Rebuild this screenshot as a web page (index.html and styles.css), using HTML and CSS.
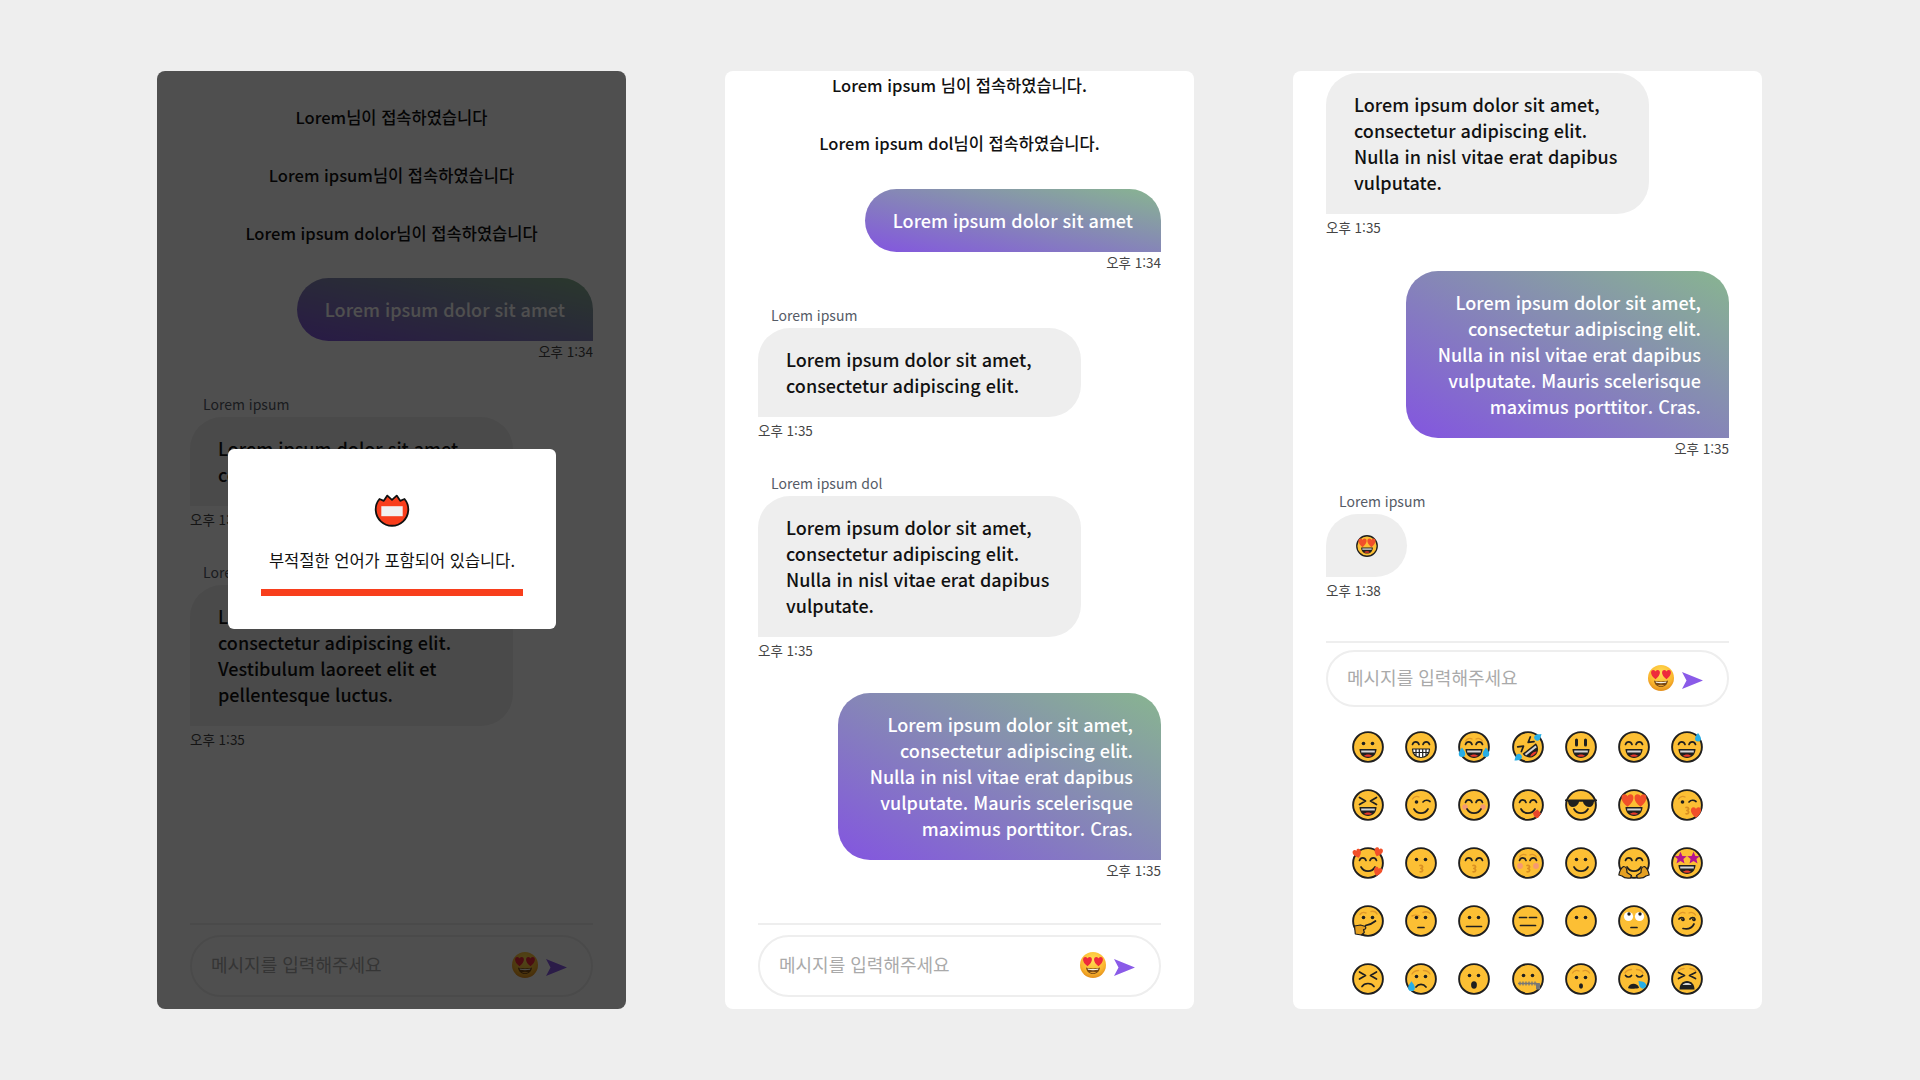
FILE: index.html
```html
<!DOCTYPE html>
<html lang="ko">
<head>
<meta charset="utf-8">
<title>Chat</title>
<link rel="stylesheet" href="styles.css">
</head>
<body>
<svg class="sprite" xmlns="http://www.w3.org/2000/svg" aria-hidden="true">
<defs>
<radialGradient id="gloss" cx="50%" cy="30%" r="75%"><stop offset="0" stop-color="#ffdf55"/><stop offset=".65" stop-color="#fbb62e"/><stop offset="1" stop-color="#dd8518"/></radialGradient>
<path id="h" d="M0 4.2C-6-.2-5-5-2.2-5-1-5-.2-4.2 0-3.4.2-4.2 1-5 2.2-5 5-5 6-.2 0 4.2z"/>
<path id="st" d="M0-5 1.5-1.6 5-1.5 2.3.8 3.2 4.4 0 2.4-3.2 4.4-2.3.8-5-1.5-1.5-1.6z"/>
<path id="dr" d="M0-4C1-2.4 2.6-.9 2.6.9A2.6 2.6 0 0 1-2.6.9C-2.6-.9-1-2.4 0-4z"/>
</defs>
<symbol id="f" viewBox="0 0 32 32"><circle class="face" cx="16" cy="16" r="14.9"/></symbol>
<symbol id="dots" viewBox="0 0 32 32"><circle class="ink" cx="11.5" cy="12.5" r="1.8"/><circle class="ink" cx="20.5" cy="12.5" r="1.8"/></symbol>
<symbol id="arcs" viewBox="0 0 32 32"><path class="ln" d="M7.5 13.5c1.2-3.6 5.3-3.6 6.5 0M18 13.5c1.2-3.6 5.3-3.6 6.5 0"/></symbol>
<symbol id="mo" viewBox="0 0 32 32"><path class="ink" d="M7.5 18h17c0 5.2-3.6 9-8.5 9s-8.5-3.8-8.5-9z"/><path class="teeth" d="M9.2 19.5h13.6v2H9.2z"/><path class="tongue" d="M12 25c1.400-2 6.600-2 8 0-1.400 1.100-6.400 1.100-8 0z"/></symbol>
<symbol id="sm" viewBox="0 0 32 32"><path class="ln" d="M9 20c3 5.500 11 5.500 14 0"/></symbol>
<symbol id="kis" viewBox="0 0 32 32"><path class="lip" d="M15 18.500c3-.6 3.600 2.200.8 3 2.800.6 2.400 3.600-.8 3.300"/></symbol>
<symbol id="bro" viewBox="0 0 32 32"><path class="brow" d="M7.500 10c1.500-2.600 4.500-3.200 6.500-2M24.500 10c-1.500-2.600-4.500-3.200-6.500-2"/></symbol>

<symbol id="e1" viewBox="0 0 32 32"><use href="#f"/><use href="#dots"/><use href="#mo"/></symbol>
<symbol id="e2" viewBox="0 0 32 32"><use href="#f"/><use href="#arcs"/><path class="grid" d="M7.500 18h17c0 5.200-3.600 8.500-8.500 8.500s-8.500-3.300-8.500-8.500zM7.800 21.500h16.400M11 18v7M14.300 18v8.300M17.700 18v8.300M21 18v7"/></symbol>
<symbol id="e3" viewBox="0 0 32 32"><use href="#f"/><use href="#bro"/><use href="#arcs"/><use href="#mo"/><use class="drop" href="#dr" transform="translate(4 21.500) scale(1.250)"/><use class="drop" href="#dr" transform="translate(28 21.500) scale(1.250)"/></symbol>
<symbol id="e4" viewBox="0 0 32 32"><use href="#f"/><g transform="rotate(-38 16 16)"><path class="ln" d="M8 9.500l5 3-5 3M24 9.500l-5 3 5 3"/><use href="#mo"/></g><use class="drop" href="#dr" transform="translate(26 6) rotate(50) scale(1.150)"/><use class="drop" href="#dr" transform="translate(6 26.500) rotate(230) scale(1.150)"/></symbol>
<symbol id="e5" viewBox="0 0 32 32"><use href="#f"/><rect class="ink" x="10" y="7.500" width="3" height="8" rx="1.500"/><rect class="ink" x="19" y="7.500" width="3" height="8" rx="1.500"/><use href="#mo"/></symbol>
<symbol id="e6" viewBox="0 0 32 32"><use href="#f"/><use href="#arcs"/><use href="#mo"/></symbol>
<symbol id="e7" viewBox="0 0 32 32"><use href="#f"/><use href="#arcs"/><use href="#mo"/><use class="drop" href="#dr" transform="translate(27 6.500) scale(1.150)"/></symbol>

<symbol id="e8" viewBox="0 0 32 32"><use href="#f"/><path class="ln" d="M7.500 8.500l6 3.500-6 3.500M24.500 8.500l-6 3.500 6 3.500"/><use href="#mo"/></symbol>
<symbol id="e9" viewBox="0 0 32 32"><use href="#f"/><path class="brow" d="M7.500 10c1.500-2.600 4.500-3.200 6.500-2"/><circle class="ink" cx="11.500" cy="13" r="1.800"/><path class="ln" d="M18 13c2-2 5-2 7-.5"/><use href="#sm"/></symbol>
<symbol id="e10" viewBox="0 0 32 32"><use href="#f"/><circle class="cheek" cx="7" cy="18" r="2.700"/><circle class="cheek" cx="25" cy="18" r="2.700"/><use href="#arcs"/><path class="ln" d="M9 20c3 5.500 11 5.500 14 0"/></symbol>
<symbol id="e11" viewBox="0 0 32 32"><use href="#f"/><use href="#arcs"/><use href="#sm"/><path class="tongue2" d="M21 23.500l4.500-3 3.500 4-3 4.500c-3 .5-5-3-5-5.500z"/></symbol>
<symbol id="e12" viewBox="0 0 32 32"><use href="#f"/><path class="ink" d="M-1 10.500h34l-1 1.600-3 .4c-.4 3.500-2 5.500-5 5.500s-5.500-2.500-6-5.200h-4c-.5 2.700-3 5.200-6 5.200s-4.600-2-5-5.500l-3-.4z"/><use href="#sm"/></symbol>
<symbol id="e13" viewBox="0 0 32 32"><use href="#f"/><use class="heart" href="#h" transform="translate(9.500 12) scale(1.350)"/><use class="heart" href="#h" transform="translate(22.500 12) scale(1.350)"/><use href="#mo"/></symbol>
<symbol id="e14" viewBox="0 0 32 32"><use href="#f"/><path class="brow" d="M7.500 10c1.500-2.600 4.500-3.200 6.500-2"/><circle class="ink" cx="11.500" cy="13" r="1.800"/><path class="ln" d="M18 13c2-2 5-2 7-.5"/><use href="#kis"/><use class="heart" href="#h" transform="translate(25 24) scale(1.150)"/></symbol>

<symbol id="e15" viewBox="0 0 32 32"><use href="#f"/><use href="#arcs"/><use href="#sm"/><use class="heart" href="#h" transform="translate(5.500 7) rotate(-20) scale(.95)"/><use class="heart" href="#h" transform="translate(26 5.500) rotate(20) scale(.95)"/><use class="heart" href="#h" transform="translate(25.500 25) rotate(20) scale(.95)"/></symbol>
<symbol id="e16" viewBox="0 0 32 32"><use href="#f"/><use href="#dots"/><use href="#kis"/></symbol>
<symbol id="e17" viewBox="0 0 32 32"><use href="#f"/><use href="#arcs"/><use href="#kis"/></symbol>
<symbol id="e18" viewBox="0 0 32 32"><use href="#f"/><use href="#bro"/><circle class="cheek" cx="8" cy="19" r="2.900"/><circle class="cheek" cx="24" cy="19" r="2.900"/><use href="#arcs"/><use href="#kis"/></symbol>
<symbol id="e19" viewBox="0 0 32 32"><use href="#f"/><use href="#dots"/><use href="#sm"/></symbol>
<symbol id="e20" viewBox="0 0 32 32"><use href="#f"/><use href="#arcs"/><use href="#sm"/><path class="hand" d="M.8 28c.6-3 2-7 4.700-8.500 2.600 0 3.500 3.500 3.500 6l4.500 3-1 2.500c-3 .5-7-.5-8.500-2zM31.200 28c-.6-3-2-7-4.700-8.500-2.600 0-3.500 3.500-3.500 6l-4.500 3 1 2.500c3 .5 7-.5 8.500-2z"/></symbol>
<symbol id="e21" viewBox="0 0 32 32"><use href="#f"/><use class="star" href="#st" transform="translate(9.500 11) scale(1.250)"/><use class="star" href="#st" transform="translate(22.500 11) scale(1.250)"/><use href="#mo"/></symbol>

<symbol id="e22" viewBox="0 0 32 32"><use href="#f"/><path class="brow" d="M8 9.500c1.500-2 4-2.500 6-1.500M19 6.500c2.500-.5 5 .5 6 2.500"/><use href="#dots"/><path class="ln" d="M13.500 20.500c3.500-.5 7-2 10-4.500"/><path class="hand" d="M2.500 21l6-1 5 1.500c.8 2 0 3-2 3l.8 3-3 2.500-6-1z"/></symbol>
<symbol id="e23" viewBox="0 0 32 32"><use href="#f"/><path class="brow" d="M7 11c2-1 5-1 7 0M18 7.500c2.500-1.200 5-.8 7 .8"/><use href="#dots"/><path class="ln" d="M13 22.500h6"/></symbol>
<symbol id="e24" viewBox="0 0 32 32"><use href="#f"/><use href="#dots"/><path class="ln" d="M8.500 21.500h15"/></symbol>
<symbol id="e25" viewBox="0 0 32 32"><use href="#f"/><path class="ln" d="M7.500 12.500h7M17.500 12.500h7M8.500 20.500h15"/></symbol>
<symbol id="e26" viewBox="0 0 32 32"><use href="#f"/><use href="#dots"/></symbol>
<symbol id="e27" viewBox="0 0 32 32"><use href="#f"/><circle class="eye" cx="10.500" cy="11.500" r="4.600"/><circle class="eye" cx="21.500" cy="11.500" r="4.600"/><circle class="ink" cx="11" cy="9" r="1.700"/><circle class="ink" cx="22" cy="9" r="1.700"/><path class="ln" d="M13 22.500h6"/></symbol>
<symbol id="e28" viewBox="0 0 32 32"><use href="#f"/><use href="#bro"/><path class="ln" d="M8 14c1.200-1.800 4.500-1.800 5 .2 0 1.400-1.800 1.600-2.200.4M19 14c1.200-1.800 4.500-1.800 5 .2 0 1.400-1.800 1.600-2.200.4M12 23.500c4.500 1 9-.5 11-4.500"/></symbol>

<symbol id="e29" viewBox="0 0 32 32"><use href="#f"/><path class="ln" d="M7.500 9l6 3.500-6 3.500M24.500 9l-6 3.500 6 3.500M10 23.500c2.500-4 9.500-4 12 0"/></symbol>
<symbol id="e30" viewBox="0 0 32 32"><use href="#f"/><path class="brow" d="M7 11c1.500-2.500 4-3.500 6.500-3.500M25 11c-1.500-2.500-4-3.500-6.500-3.500"/><use href="#dots" y="1"/><path class="ln" d="M11 24c2.500-3.500 7.500-3.500 10 0"/><use class="drop" href="#dr" transform="translate(6.500 23.500) scale(1.300)"/></symbol>
<symbol id="e31" viewBox="0 0 32 32"><use href="#f"/><use href="#dots"/><ellipse class="ink" cx="16" cy="22" rx="2.900" ry="3.700"/></symbol>
<symbol id="e32" viewBox="0 0 32 32"><use href="#f"/><use href="#dots"/><path class="zip" d="M6 20.500h19M8 18.500v4M11 18.500v4M14 18.500v4M17 18.500v4M20 18.500v4M23 18.500v4"/><rect class="pull" x="24" y="20" width="4" height="6.500" rx=".8"/></symbol>
<symbol id="e33" viewBox="0 0 32 32"><use href="#f"/><path class="brow" d="M7.500 10c1.500-2.600 4.500-3.200 6.500-2M24.500 10c-1.500-2.600-4.500-3.200-6.500-2"/><use href="#dots" y="2"/><ellipse class="ink" cx="16" cy="23" rx="2" ry="2.700"/></symbol>
<symbol id="e34" viewBox="0 0 32 32"><use href="#f"/><path class="brow" d="M7 10c1.500-2.500 4-3.500 6.500-3.500M25 10c-1.500-2.500-4-3.500-6.500-3.500"/><path class="ln" d="M7.500 12.500c1.500 2 4.500 2 6 0M18.500 12.500c1.500 2 4.500 2 6 0"/><path class="ink" d="M10 25c1-5 9-6 11-.5.500 1.500-11 1.500-11 .5z"/><use class="drop" href="#dr" transform="translate(24 21.500) scale(1.250) rotate(-45)"/></symbol>
<symbol id="e35" viewBox="0 0 32 32"><use href="#f"/><path class="brow" d="M7 8c2-2 4-2.500 6-2.500M25 8c-2-2-4-2.500-6-2.500"/><path class="ln" d="M7.500 9.500l6 3-6 3M24.500 9.500l-6 3 6 3"/><path class="ink" d="M8.500 26.500c0-5 3-8.500 7.500-8.500s7.500 3.500 7.500 8.500z"/><path class="teeth" d="M11.500 22c2-2.600 7-2.600 9 0z"/></symbol>

<symbol id="love" viewBox="0 0 26 26"><circle cx="13" cy="13" r="13" fill="url(#gloss)"/><use class="heart2" href="#h" transform="translate(7.500 10)"/><use class="heart2" href="#h" transform="translate(18.500 10)"/><path d="M6 15.500c4 1.200 10 1.200 14 0-.5 4.300-3.300 6.500-7 6.500s-6.500-2.200-7-6.500z" fill="#7a4a14"/><path d="M7.500 16.500c3.500.8 7.500.8 11 0l-.5 1.300c-3 .5-7 .5-10 0z" fill="#f7f4ea"/><path d="M9.500 20.500c2-1.100 5-1.100 7 0-2 1-5 1-7 0z" fill="#e39b2e"/></symbol>
<symbol id="send" viewBox="0 0 21 17"><path d="M0 0 21 8.500 0 17 4.500 8.500z" fill="#8a5be8"/></symbol>
<symbol id="badge" viewBox="0 0 36 36"><path d="M5.500 6 9.800 7.800 13.300 2.600 18 6.800 22.700 2.600 26.200 7.800 30.500 6A16.300 16.300 0 1 1 5.500 6Z" fill="#f83e1c" stroke="#111" stroke-width="1.800" stroke-linejoin="round"/><rect x="7.300" y="13.200" width="21.400" height="10" fill="#f1f1f1"/></symbol>
</svg>

<main class="board">

  <section class="panel">
    <div class="log log-open">
      <p class="notice">Lorem님이 접속하였습니다</p>
      <p class="notice">Lorem ipsum님이 접속하였습니다</p>
      <p class="notice">Lorem ipsum dolor님이 접속하였습니다</p>
      <div class="msg mine">
        <div class="bubble">Lorem ipsum dolor sit amet</div>
        <span class="time">오후 1:34</span>
      </div>
      <div class="msg theirs">
        <span class="name">Lorem ipsum</span>
        <div class="bubble">Lorem ipsum dolor sit amet, consectetur adipiscing elit.</div>
        <span class="time">오후 1:35</span>
      </div>
      <div class="msg theirs">
        <span class="name">Lorem ipsum dol</span>
        <div class="bubble">Lorem ipsum dolor sit amet, consectetur adipiscing elit. Vestibulum laoreet elit et pellentesque luctus.</div>
        <span class="time">오후 1:35</span>
      </div>
    </div>
    <div class="composer">
      <div class="field">
        <input class="entry" type="text" placeholder="메시지를 입력해주세요">
        <svg class="love"><use href="#love"/></svg>
        <svg class="send"><use href="#send"/></svg>
      </div>
    </div>
    <div class="overlay">
      <div class="modal">
        <svg class="badge"><use href="#badge"/></svg>
        <p class="modal-text">부적절한 언어가 포함되어 있습니다.</p>
        <div class="modal-bar"></div>
      </div>
    </div>
  </section>

  <section class="panel">
    <div class="log log-scrolled">
      <p class="notice">Lorem ipsum 님이 접속하였습니다.</p>
      <p class="notice">Lorem ipsum dol님이 접속하였습니다.</p>
      <div class="msg mine">
        <div class="bubble">Lorem ipsum dolor sit amet</div>
        <span class="time">오후 1:34</span>
      </div>
      <div class="msg theirs">
        <span class="name">Lorem ipsum</span>
        <div class="bubble">Lorem ipsum dolor sit amet, consectetur adipiscing elit.</div>
        <span class="time">오후 1:35</span>
      </div>
      <div class="msg theirs">
        <span class="name">Lorem ipsum dol</span>
        <div class="bubble">Lorem ipsum dolor sit amet, consectetur adipiscing elit. Nulla in nisl vitae erat dapibus vulputate.</div>
        <span class="time">오후 1:35</span>
      </div>
      <div class="msg mine">
        <div class="bubble">Lorem ipsum dolor sit amet, consectetur adipiscing elit. Nulla in nisl vitae erat dapibus vulputate. Mauris scelerisque maximus porttitor. Cras.</div>
        <span class="time">오후 1:35</span>
      </div>
    </div>
    <div class="composer">
      <div class="field">
        <input class="entry" type="text" placeholder="메시지를 입력해주세요">
        <svg class="love"><use href="#love"/></svg>
        <svg class="send"><use href="#send"/></svg>
      </div>
    </div>
  </section>

  <section class="panel">
    <div class="log">
      <div class="msg theirs msg-first">
        <div class="bubble">Lorem ipsum dolor sit amet, consectetur adipiscing elit. Nulla in nisl vitae erat dapibus vulputate.</div>
        <span class="time">오후 1:35</span>
      </div>
      <div class="msg mine">
        <div class="bubble">Lorem ipsum dolor sit amet, consectetur adipiscing elit. Nulla in nisl vitae erat dapibus vulputate. Mauris scelerisque maximus porttitor. Cras.</div>
        <span class="time">오후 1:35</span>
      </div>
      <div class="msg theirs">
        <span class="name">Lorem ipsum</span>
        <div class="bubble bubble-emoji"><svg class="emoji-sm"><use href="#e13"/></svg></div>
        <span class="time">오후 1:38</span>
      </div>
    </div>
    <div class="composer composer-tight">
      <div class="field">
        <input class="entry" type="text" placeholder="메시지를 입력해주세요">
        <svg class="love"><use href="#love"/></svg>
        <svg class="send"><use href="#send"/></svg>
      </div>
    </div>
    <div class="picker">
      <svg class="emoji"><use href="#e1"/></svg><svg class="emoji"><use href="#e2"/></svg><svg class="emoji"><use href="#e3"/></svg><svg class="emoji"><use href="#e4"/></svg><svg class="emoji"><use href="#e5"/></svg><svg class="emoji"><use href="#e6"/></svg><svg class="emoji"><use href="#e7"/></svg>
      <svg class="emoji"><use href="#e8"/></svg><svg class="emoji"><use href="#e9"/></svg><svg class="emoji"><use href="#e10"/></svg><svg class="emoji"><use href="#e11"/></svg><svg class="emoji"><use href="#e12"/></svg><svg class="emoji"><use href="#e13"/></svg><svg class="emoji"><use href="#e14"/></svg>
      <svg class="emoji"><use href="#e15"/></svg><svg class="emoji"><use href="#e16"/></svg><svg class="emoji"><use href="#e17"/></svg><svg class="emoji"><use href="#e18"/></svg><svg class="emoji"><use href="#e19"/></svg><svg class="emoji"><use href="#e20"/></svg><svg class="emoji"><use href="#e21"/></svg>
      <svg class="emoji"><use href="#e22"/></svg><svg class="emoji"><use href="#e23"/></svg><svg class="emoji"><use href="#e24"/></svg><svg class="emoji"><use href="#e25"/></svg><svg class="emoji"><use href="#e26"/></svg><svg class="emoji"><use href="#e27"/></svg><svg class="emoji"><use href="#e28"/></svg>
      <svg class="emoji"><use href="#e29"/></svg><svg class="emoji"><use href="#e30"/></svg><svg class="emoji"><use href="#e31"/></svg><svg class="emoji"><use href="#e32"/></svg><svg class="emoji"><use href="#e33"/></svg><svg class="emoji"><use href="#e34"/></svg><svg class="emoji"><use href="#e35"/></svg>
    </div>
  </section>

</main>
</body>
</html>
```

FILE: styles.css
```css
* { box-sizing: border-box; }

html, body { margin: 0; height: 100%; }

body {
  background: #eeeeee;
  color: #111;
  font-family: "Noto Sans CJK KR", "Noto Sans", sans-serif;
  overflow: hidden;
}

.sprite { position: absolute; width: 0; height: 0; }

.board {
  height: 1080px;
  padding: 71px 158px 71px 157px;
  display: flex;
  gap: 99px;
}

.panel {
  position: relative;
  width: 469px;
  height: 938px;
  padding: 0 33px;
  background: #fff;
  border-radius: 8px;
  display: flex;
  flex-direction: column;
  overflow: hidden;
}

.log {
  flex: 1;
  min-height: 0;
  padding-top: 2px;
  overflow: hidden;
  display: flex;
  flex-direction: column;
}

.log-open { padding-top: 33px; }
.log-scrolled { padding-top: 1px; }
.log-scrolled .notice + .msg { margin-top: 1px; }

.notice {
  margin: 0 0 32px;
  font-size: 16.5px;
  font-weight: 500;
  line-height: 26px;
  text-align: center;
  color: #111;
}

.msg { display: flex; flex-direction: column; flex: none; }
.msg + .msg { margin-top: 33px; }
.msg-first { padding-bottom: 1px; }
.mine { align-items: flex-end; }
.theirs { align-items: flex-start; }

.name {
  margin: 0 0 3px 13px;
  font-size: 14px;
  line-height: 20px;
  color: #555b66;
}

.bubble {
  max-width: 323px;
  padding: 17.5px 28px 19.5px;
  font-size: 18px;
  font-weight: 500;
  line-height: 26px;
  border-radius: 32px;
}

.mine .bubble {
  color: #fff;
  text-align: right;
  background: linear-gradient(to top right, #8355e0, #88b590);
  border-bottom-right-radius: 0;
}

.theirs .bubble {
  color: #111;
  background: #eeeeee;
  border-bottom-left-radius: 0;
}

.theirs .bubble-emoji {
  width: 81px;
  height: 63px;
  padding: 0;
  display: flex;
  align-items: center;
  justify-content: center;
}

.time {
  font-size: 13.5px;
  line-height: 20px;
  color: #444;
}

.theirs .time { margin-top: 3px; }

.composer {
  flex: none;
  margin-top: auto;
  border-top: 2px solid #eeeeee;
  padding: 10px 0 12px;
}

.composer-tight { padding: 7px 0 0; }
.composer-tight .field { height: 57px; }
.composer-tight .entry { margin-top: -3px; }

.field {
  height: 62px;
  padding: 0 24px 0 19px;
  border: 2px solid #eeeeee;
  border-radius: 31px;
  display: flex;
  align-items: center;
}

.entry {
  flex: 1;
  min-width: 0;
  height: 30px;
  margin-top: -5px;
  padding: 0;
  border: 0;
  outline: 0;
  background: transparent;
  font: 400 18px "Noto Sans CJK KR", sans-serif;
  color: #111;
}

.entry::placeholder { color: #aaaaaa; opacity: 1; }

.love { flex: none; width: 26px; height: 26px; margin-top: -2px; }
.send { flex: none; width: 21px; height: 17px; margin: 3px 0 0 8px; }

.picker {
  flex: none;
  margin-top: 24px;
  padding-bottom: 14px;
  display: grid;
  grid-template-columns: repeat(7, 32px);
  justify-content: center;
  column-gap: 21.33px;
  row-gap: 26px;
}

.emoji { display: block; width: 32px; height: 32px; }
.emoji-sm { display: block; width: 22px; height: 22px; }

.overlay {
  position: absolute;
  inset: 0;
  background: rgba(0, 0, 0, .69);
  display: flex;
  align-items: center;
  justify-content: center;
}

.modal {
  width: 328px;
  height: 180px;
  margin: -2px 0 0 1px;
  padding-top: 44px;
  background: #fff;
  border-radius: 6px;
  display: flex;
  flex-direction: column;
  align-items: center;
}

.badge { display: block; width: 36px; height: 36px; flex: none; }

.modal-text {
  margin: 19px 0 0;
  font-size: 16.5px;
  line-height: 24px;
  color: #111;
}

.modal-bar {
  width: 262px;
  height: 7px;
  margin-top: 17px;
  background: #f83e1c;
}

/* emoji parts */
.face { fill: #fcbf34; stroke: #1f1f1f; stroke-width: 1.9; }
.ink { fill: #1f1f1f; }
.ln { fill: none; stroke: #1f1f1f; stroke-width: 1.7; stroke-linecap: round; stroke-linejoin: round; }
.brow { fill: none; stroke: #e0992a; stroke-width: 1.4; stroke-linecap: round; }
.lip { fill: none; stroke: #d98f22; stroke-width: 1.6; stroke-linecap: round; stroke-linejoin: round; }
.teeth { fill: #d4d4d4; }
.tongue { fill: #e8392a; }
.tongue2 { fill: #e8452a; }
.drop { fill: #27aee6; }
.heart { fill: #f1502a; }
.heart2 { fill: #ee2a3c; }
.star { fill: #b5138e; }
.cheek { fill: #f59a72; }
.eye { fill: #fff; }
.hand { fill: #e5a021; stroke: #1f1f1f; stroke-width: 1.2; stroke-linejoin: round; }
.grid { fill: #fff; stroke: #1f1f1f; stroke-width: 1.2; stroke-linejoin: round; }
.zip { fill: none; stroke: #777; stroke-width: 1.3; }
.pull { fill: #777; }
```
